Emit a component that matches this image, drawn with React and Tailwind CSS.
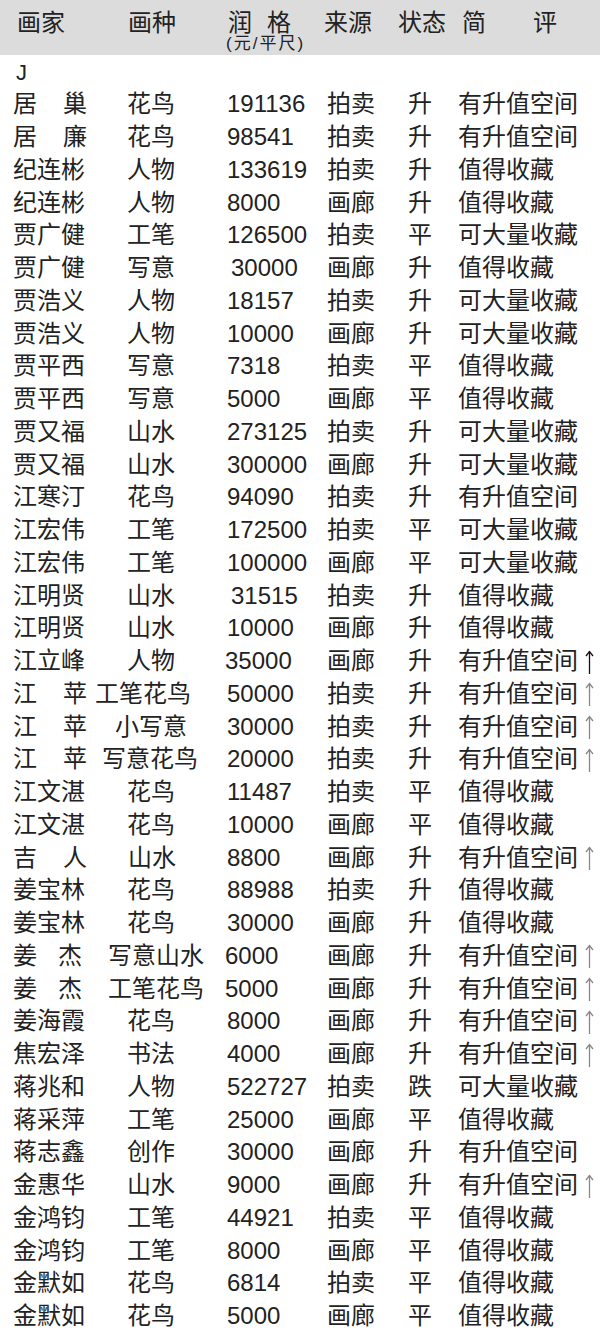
import React from 'react';

// [name, gap for two-char names, type, type offset class, price, price offset class, source, status, review, arrow colour]
const rows = [
  ['居巢', 'ml-[26px]', '花鸟', 'pl-[32px]', '191136', 'pl-[2px]', '拍卖', '升', '有升值空间', ''],
  ['居廉', 'ml-[26px]', '花鸟', 'pl-[32px]', '98541', 'pl-[2px]', '拍卖', '升', '有升值空间', ''],
  ['纪连彬', '', '人物', 'pl-[32px]', '133619', 'pl-[2px]', '拍卖', '升', '值得收藏', ''],
  ['纪连彬', '', '人物', 'pl-[32px]', '8000', 'pl-[2px]', '画廊', '升', '值得收藏', ''],
  ['贾广健', '', '工笔', 'pl-[32px]', '126500', 'pl-[2px]', '拍卖', '平', '可大量收藏', ''],
  ['贾广健', '', '写意', 'pl-[32px]', '30000', 'pl-[6px]', '画廊', '升', '值得收藏', ''],
  ['贾浩义', '', '人物', 'pl-[32px]', '18157', 'pl-[2px]', '拍卖', '升', '可大量收藏', ''],
  ['贾浩义', '', '人物', 'pl-[32px]', '10000', 'pl-[2px]', '画廊', '升', '可大量收藏', ''],
  ['贾平西', '', '写意', 'pl-[32px]', '7318', 'pl-[2px]', '拍卖', '平', '值得收藏', ''],
  ['贾平西', '', '写意', 'pl-[32px]', '5000', 'pl-[2px]', '画廊', '平', '值得收藏', ''],
  ['贾又福', '', '山水', 'pl-[32px]', '273125', 'pl-[2px]', '拍卖', '升', '可大量收藏', ''],
  ['贾又福', '', '山水', 'pl-[32px]', '300000', 'pl-[2px]', '画廊', '升', '可大量收藏', ''],
  ['江寒汀', '', '花鸟', 'pl-[32px]', '94090', 'pl-[2px]', '拍卖', '升', '有升值空间', ''],
  ['江宏伟', '', '工笔', 'pl-[32px]', '172500', 'pl-[2px]', '拍卖', '平', '可大量收藏', ''],
  ['江宏伟', '', '工笔', 'pl-[32px]', '100000', 'pl-[2px]', '画廊', '平', '可大量收藏', ''],
  ['江明贤', '', '山水', 'pl-[32px]', '31515', 'pl-[6px]', '拍卖', '升', '值得收藏', ''],
  ['江明贤', '', '山水', 'pl-[32px]', '10000', 'pl-[2px]', '画廊', '升', '值得收藏', ''],
  ['江立峰', '', '人物', 'pl-[32px]', '35000', 'pl-0', '画廊', '升', '有升值空间', 'text-[#111]'],
  ['江苹', 'ml-[26px]', '工笔花鸟', 'pl-0', '50000', 'pl-[2px]', '拍卖', '升', '有升值空间', 'text-[#888]'],
  ['江苹', 'ml-[26px]', '小写意', 'pl-[20px]', '30000', 'pl-[2px]', '拍卖', '升', '有升值空间', 'text-[#888]'],
  ['江苹', 'ml-[26px]', '写意花鸟', 'pl-[7px]', '20000', 'pl-[2px]', '拍卖', '升', '有升值空间', 'text-[#888]'],
  ['江文湛', '', '花鸟', 'pl-[32px]', '11487', 'pl-[2px]', '拍卖', '平', '值得收藏', ''],
  ['江文湛', '', '花鸟', 'pl-[32px]', '10000', 'pl-[2px]', '画廊', '平', '值得收藏', ''],
  ['吉人', 'ml-[26px]', '山水', 'pl-[33px]', '8800', 'pl-[2px]', '画廊', '升', '有升值空间', 'text-[#888]'],
  ['姜宝林', '', '花鸟', 'pl-[32px]', '88988', 'pl-[2px]', '拍卖', '升', '值得收藏', ''],
  ['姜宝林', '', '花鸟', 'pl-[32px]', '30000', 'pl-[2px]', '画廊', '升', '值得收藏', ''],
  ['姜杰', 'ml-[21px]', '写意山水', 'pl-[13px]', '6000', 'pl-0', '画廊', '升', '有升值空间', 'text-[#888]'],
  ['姜杰', 'ml-[21px]', '工笔花鸟', 'pl-[13px]', '5000', 'pl-0', '画廊', '升', '有升值空间', 'text-[#888]'],
  ['姜海霞', '', '花鸟', 'pl-[32px]', '8000', 'pl-[2px]', '画廊', '升', '有升值空间', 'text-[#888]'],
  ['焦宏泽', '', '书法', 'pl-[32px]', '4000', 'pl-[2px]', '画廊', '升', '有升值空间', 'text-[#888]'],
  ['蒋兆和', '', '人物', 'pl-[32px]', '522727', 'pl-[2px]', '拍卖', '跌', '可大量收藏', ''],
  ['蒋采萍', '', '工笔', 'pl-[32px]', '25000', 'pl-[2px]', '画廊', '平', '值得收藏', ''],
  ['蒋志鑫', '', '创作', 'pl-[32px]', '30000', 'pl-[2px]', '画廊', '升', '有升值空间', ''],
  ['金惠华', '', '山水', 'pl-[32px]', '9000', 'pl-[2px]', '画廊', '升', '有升值空间', 'text-[#888]'],
  ['金鸿钧', '', '工笔', 'pl-[32px]', '44921', 'pl-[2px]', '拍卖', '平', '值得收藏', ''],
  ['金鸿钧', '', '工笔', 'pl-[32px]', '8000', 'pl-[2px]', '画廊', '平', '值得收藏', ''],
  ['金默如', '', '花鸟', 'pl-[32px]', '6814', 'pl-[2px]', '拍卖', '平', '值得收藏', ''],
  ['金默如', '', '花鸟', 'pl-[32px]', '5000', 'pl-[2px]', '画廊', '平', '值得收藏', ''],
];

const Name = ({ name, gap }) => {
  if (!gap) return <span>{name}</span>;
  return (
    <span className="flex">
      <span>{name[0]}</span>
      <span className={gap}>{name[1]}</span>
    </span>
  );
};

const UpArrow = ({ className }) => (
  <svg width="9" height="24" viewBox="0 0 9 24" className={className} fill="none" stroke="currentColor" strokeWidth="1.3">
    <path d="M4.5 1.5V24" />
    <path d="M1 6L4.5 1.5L8 6" strokeLinejoin="miter" />
  </svg>
);

const App = () => {
  return (
    <div className="w-[600px] h-[1337px] overflow-hidden bg-white text-[#222] font-['Liberation_Sans','Noto_Sans_CJK_SC',sans-serif]">
      {/* header */}
      <div className="h-[55px] bg-[#dcdcdc] flex pt-[9px] text-[24px] leading-[28px]">
        <div className="w-[128px] pl-[17px]">画家</div>
        <div className="w-[98px]">画种</div>
        <div className="w-[98px] flex flex-col">
          <div className="flex pl-[2px]">
            <span>润</span>
            <span className="ml-[15px]">格</span>
          </div>
          <div className="text-[17px] leading-[17px] -mt-[2px] tracking-[2px] whitespace-nowrap">(元/平尺)</div>
        </div>
        <div className="w-[74px]">来源</div>
        <div className="w-[64px]">状态</div>
        <div className="w-[71px]">简</div>
        <div>评</div>
      </div>

      <div className="h-[33px] pl-[16px] pt-[6px] text-[22px] leading-[24px]">J</div>

      <div className="flex flex-col">
        {rows.map((r, i) => (
          <div key={i} className="h-[32.75px] flex items-center text-[24px] leading-[32px] whitespace-nowrap">
            <div className="w-[95px] pl-[13px]">
              <Name name={r[0]} gap={r[1]} />
            </div>
            <div className={`w-[130px] ${r[3]}`}>{r[2]}</div>
            <div className={`w-[102px] ${r[5]}`}>{r[4]}</div>
            <div className="w-[81px]">{r[6]}</div>
            <div className="w-[50px]">{r[7]}</div>
            <div className="flex-1 flex items-center">
              <span>{r[8]}</span>
              {r[9] && <UpArrow className={`ml-[7px] mt-[1px] ${r[9]}`} />}
            </div>
          </div>
        ))}
      </div>
    </div>
  );
};

export default App;
